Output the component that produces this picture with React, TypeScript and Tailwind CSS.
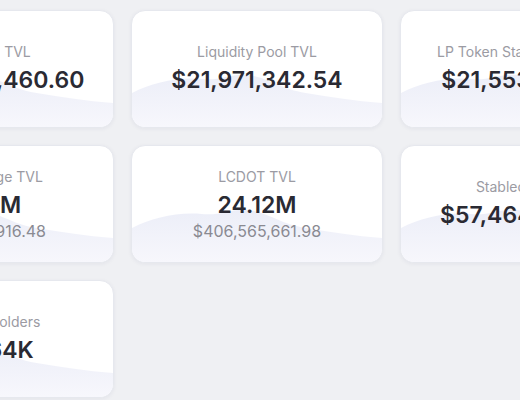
import React from "react";

type Stat = {
  label: string;
  value: string;
  sub?: string;
};

const stats: Array<Stat | null> = [
  { label: "Protocol TVL", value: "$123,456,460.60" },
  { label: "Liquidity Pool TVL", value: "$21,971,342.54" },
  { label: "LP Token Staking Pool TVL", value: "$21,553,218.07" },
  { label: "XCM Bridge TVL", value: "5.21M", sub: "$87,654,916.48" },
  { label: "LCDOT TVL", value: "24.12M", sub: "$406,565,661.98" },
  { label: "Stablecoin TVL", value: "$57,464,190.33" },
  { label: "All ACA Holders", value: "212.64K" },
  null,
  null,
];

function Hills({ id }: { id: number }) {
  const grad = `hill-${id}`;
  return (
    <svg
      className="absolute inset-x-0 bottom-0 w-full h-[60px]"
      viewBox="0 0 252 60"
      preserveAspectRatio="none"
    >
      <defs>
        <linearGradient id={grad} x1="0" y1="0" x2="0" y2="1">
          <stop offset="0" stopColor="#eceef8" />
          <stop offset="1" stopColor="#f7f7fc" />
        </linearGradient>
      </defs>
      <path
        d="M0 26 C 20 16, 45 10, 70 12 C 90 14, 100 6, 118 8 C 140 12, 150 22, 175 26 C 200 30, 225 34, 252 36 L 252 60 L 0 60 Z"
        fill={`url(#${grad})`}
      />
    </svg>
  );
}

function StatCard({ stat, index }: { stat: Stat; index: number }) {
  return (
    <div className="relative overflow-hidden h-[118px] rounded-[14px] bg-white border border-[#e6e8ee] shadow-[0_1px_4px_rgba(30,40,80,0.06)] flex flex-col items-center justify-center">
      <Hills id={index} />
      <div className="relative flex flex-col items-center">
        <p className="text-[14px] leading-5 text-[#9b9ba3]">{stat.label}</p>
        <p className="mt-[2px] text-[23px] leading-8 font-semibold text-[#2a2a33]">
          {stat.value}
        </p>
        {stat.sub && (
          <p className="text-[16px] leading-5 text-[#8a8a92]">{stat.sub}</p>
        )}
      </div>
    </div>
  );
}

export default function App() {
  return (
    <div
      className="w-[520px] h-[400px] overflow-hidden bg-[#eff0f3]"
      style={{ fontFamily: "Inter, 'Noto Sans', sans-serif" }}
    >
      <div className="ml-[-138px] pt-[10px] grid grid-cols-[252px_252px_252px] gap-[17px] w-max">
        {stats.map((stat, i) =>
          stat ? <StatCard key={i} index={i} stat={stat} /> : <div key={i} />
        )}
      </div>
    </div>
  );
}
